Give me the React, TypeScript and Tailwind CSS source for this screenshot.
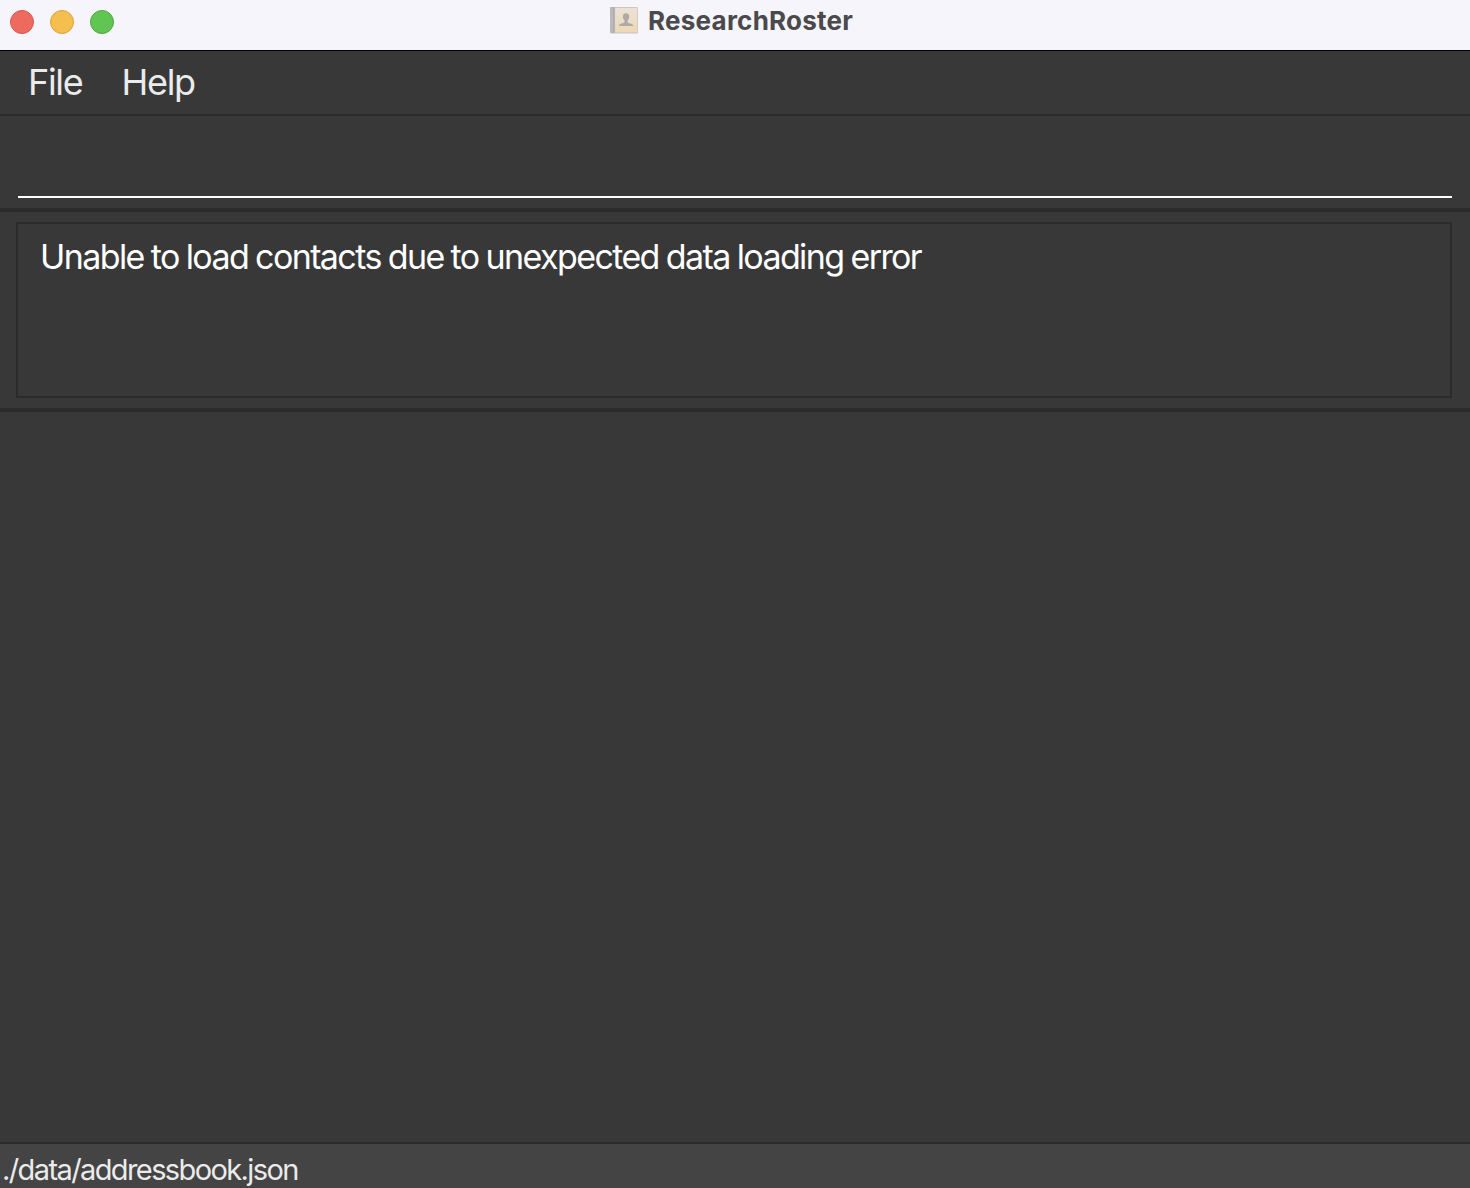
function ContactsIcon() {
  return (
    <svg width="30" height="30" viewBox="0 0 30 30" className="shrink-0">
      <defs>
        <linearGradient id="cover" x1="0" y1="0" x2="0" y2="1">
          <stop offset="0" stopColor="#ebe2d7" />
          <stop offset="1" stopColor="#ecd9b5" />
        </linearGradient>
      </defs>
      <rect x="1.5" y="2" width="27.5" height="26" rx="1" fill="#dedce0" />
      <rect x="1" y="1" width="28" height="26" rx="1" fill="#cfc7bd" />
      <rect x="1" y="1" width="5" height="26" rx="0.8" fill="#bcb9bd" />
      <rect x="4" y="1" width="1.2" height="25.5" fill="#aeabaf" />
      <rect x="6.2" y="2" width="22" height="24.3" fill="url(#cover)" />
      <path
        d="M17 7.2c-2.1 0-3.2 1.5-3.1 3.6.1 1.9.8 3 1.6 3.7v1.8c-.5 1-5.3 1.1-5.7 3.6h14.6c-.4-2.5-5.3-2.6-5.8-3.6v-1.8c.8-.7 1.5-1.8 1.6-3.7.1-2.1-1.1-3.6-3.2-3.6z"
        fill="#aea9a5"
      />
    </svg>
  );
}

export default function App() {
  return (
    <div className="flex h-[1188px] w-[1470px] flex-col overflow-hidden bg-[#383838] font-['Inter',sans-serif]">
      <header className="grid h-[51px] shrink-0 grid-cols-[609px_1fr] border-b border-black bg-[#f6f5fc]">
        <div className="flex gap-4 pt-2.5 pl-2.5">
          <span className="size-6 rounded-full border border-[#d9564d] bg-[#ed6a5e]" />
          <span className="size-6 rounded-full border border-[#dba23b] bg-[#f5bf4f]" />
          <span className="size-6 rounded-full border border-[#4fa73e] bg-[#61c554]" />
        </div>
        <div className="flex gap-[9px] pt-1.5">
          <ContactsIcon />
          <h1 className="text-[26px] leading-[30px] font-bold tracking-[0.25px] text-[#4a494b]">ResearchRoster</h1>
        </div>
      </header>

      <nav className="flex h-[65px] shrink-0 gap-[39px] border-b-2 border-[#2b2b2b] pt-[9px] pl-7 text-[36px] leading-[44px] font-normal tracking-[-1.3px] text-[#ebebeb]">
        <span>File</span>
        <span>Help</span>
      </nav>

      <section className="h-24 shrink-0 border-b-4 border-[#2b2b2b] pr-[18px] pl-[18px]">
        <input
          aria-label="Command"
          className="block h-[82px] w-full border-b-2 border-white bg-transparent text-[34px] text-white outline-none"
        />
      </section>

      <section className="h-[200px] shrink-0 border-b-4 border-[#2b2b2b] pt-2.5 pr-[18px] pl-4">
        <div className="h-44 border-2 border-[#2b2b2b] pt-3 pl-[22px] text-[34px] leading-[42px] font-normal tracking-[-1.6px] [word-spacing:-1px] whitespace-nowrap text-white">
          <span>Unable to load contacts due to unexpected data loading error</span>
        </div>
      </section>

      <main className="flex-1" />

      <footer className="h-[46px] shrink-0 border-t-2 border-[#2b2b2b] bg-[#444444] pt-2 pl-[2px] text-[29px] leading-9 font-normal tracking-[-1.6px] text-[#ebebeb]">
        <span>./data/addressbook.json</span>
      </footer>
    </div>
  );
}
